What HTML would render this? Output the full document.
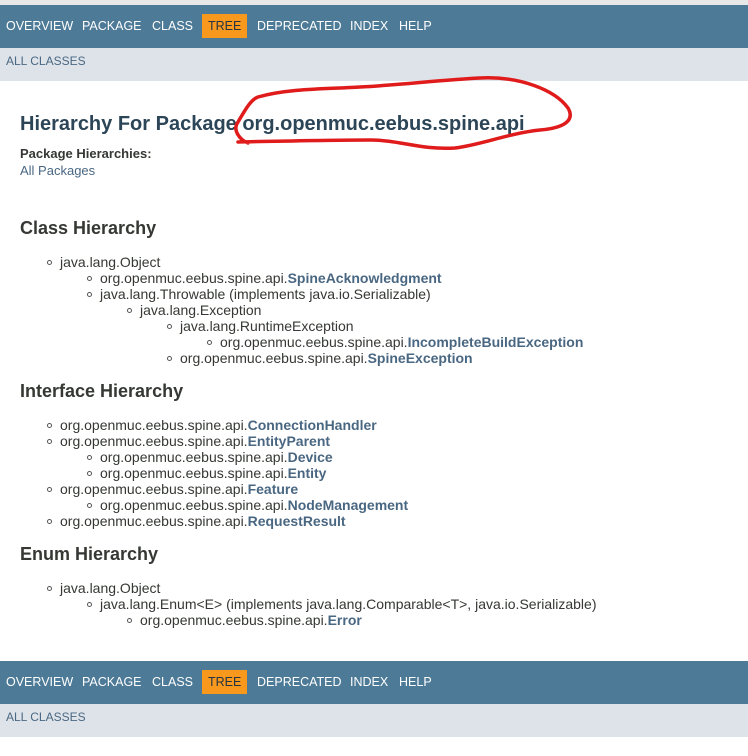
<!DOCTYPE html>
<html><head><style>
body{margin:0;width:748px;height:756px;background:#fff;font-family:"Liberation Sans",Arial,sans-serif;color:#353833;position:relative;overflow:hidden}
.a{position:absolute;white-space:nowrap}
.top{position:absolute;left:0;top:0;width:748px;height:5px;background:#e8e8e8}
.nav{position:absolute;left:0;width:748px;height:43px;background:#4d7a97}
.sub{position:absolute;left:0;width:748px;height:33px;background:#dee3e9}
.nav span{position:absolute;top:14px;font-size:12.5px;color:#fff}
.nav .t{background:#f8981d;color:#253441;padding:5px 6px;top:9px}
.sub span{position:absolute;left:6px;top:6px;font-size:12px;color:#4a6782}
.li{font-size:14px;height:16px;line-height:16px}
.li:before{content:"";position:absolute;left-13px;left:-13px;top:6px;width:3px;height:3px;border:1px solid #555;border-radius:50%}
b.l{color:#4a6782}
h1,h2{margin:0;position:absolute;white-space:nowrap}
</style></head><body>
<div class="top"></div>
<div class="nav" style="top:5px"><span style="left:6px">OVERVIEW</span><span style="left:82px">PACKAGE</span><span style="left:152px">CLASS</span><span class="t" style="left:202px">TREE</span><span style="left:257px">DEPRECATED</span><span style="left:350px">INDEX</span><span style="left:399px">HELP</span></div>
<div class="sub" style="top:48px"><span>ALL CLASSES</span></div>
<h1 style="left:20px;top:113px;font-size:20px;color:#2c4557">Hierarchy For Package org.openmuc.eebus.spine.api</h1>
<div class="a" style="left:20px;top:146px;font-size:13px;font-weight:bold">Package Hierarchies:</div>
<div class="a" style="left:20px;top:163px;font-size:13px;color:#4a6782">All Packages</div>
<h2 style="left:20px;top:218px;font-size:18px">Class Hierarchy</h2>
<div class="a li" style="left:60px;top:254px">java.lang.Object</div>
<div class="a li" style="left:100px;top:270px">org.openmuc.eebus.spine.api.<b class="l">SpineAcknowledgment</b></div>
<div class="a li" style="left:100px;top:286px">java.lang.Throwable (implements java.io.Serializable)</div>
<div class="a li" style="left:140px;top:302px">java.lang.Exception</div>
<div class="a li" style="left:180px;top:318px">java.lang.RuntimeException</div>
<div class="a li" style="left:220px;top:334px">org.openmuc.eebus.spine.api.<b class="l">IncompleteBuildException</b></div>
<div class="a li" style="left:180px;top:350px">org.openmuc.eebus.spine.api.<b class="l">SpineException</b></div>
<h2 style="left:20px;top:381px;font-size:18px">Interface Hierarchy</h2>
<div class="a li" style="left:60px;top:417px">org.openmuc.eebus.spine.api.<b class="l">ConnectionHandler</b></div>
<div class="a li" style="left:60px;top:433px">org.openmuc.eebus.spine.api.<b class="l">EntityParent</b></div>
<div class="a li" style="left:100px;top:449px">org.openmuc.eebus.spine.api.<b class="l">Device</b></div>
<div class="a li" style="left:100px;top:465px">org.openmuc.eebus.spine.api.<b class="l">Entity</b></div>
<div class="a li" style="left:60px;top:481px">org.openmuc.eebus.spine.api.<b class="l">Feature</b></div>
<div class="a li" style="left:100px;top:497px">org.openmuc.eebus.spine.api.<b class="l">NodeManagement</b></div>
<div class="a li" style="left:60px;top:513px">org.openmuc.eebus.spine.api.<b class="l">RequestResult</b></div>
<h2 style="left:20px;top:544px;font-size:18px">Enum Hierarchy</h2>
<div class="a li" style="left:60px;top:580px">java.lang.Object</div>
<div class="a li" style="left:100px;top:596px">java.lang.Enum&lt;E&gt; (implements java.lang.Comparable&lt;T&gt;, java.io.Serializable)</div>
<div class="a li" style="left:140px;top:612px">org.openmuc.eebus.spine.api.<b class="l">Error</b></div>
<div class="nav" style="top:661px"><span style="left:6px">OVERVIEW</span><span style="left:82px">PACKAGE</span><span style="left:152px">CLASS</span><span class="t" style="left:202px">TREE</span><span style="left:257px">DEPRECATED</span><span style="left:350px">INDEX</span><span style="left:399px">HELP</span></div>
<div class="sub" style="top:704px"><span>ALL CLASSES</span></div>
<svg class="a" style="left:0;top:0" width="748" height="756"><path d="M248,143 C240,140 232,130 238,122 C244,112 250,100 258,97 C290,88 330,89 360,87 C400,85 440,80 480,78 C520,76 555,90 568,108 C575,120 565,128 540,130 C510,133 480,145 455,148 C420,150 400,140 370,140 C330,140 290,141 238,142" fill="none" stroke="#e01b1b" stroke-width="3.5" stroke-linecap="round"/></svg>
</body></html>
